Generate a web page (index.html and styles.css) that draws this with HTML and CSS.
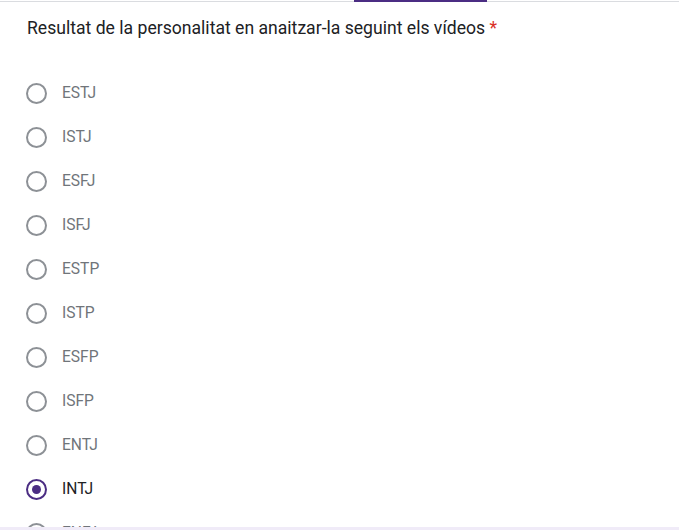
FILE: index.html
```html
<!DOCTYPE html>
<html>
  <head>
    <link rel="stylesheet" href="styles.css">
  </head>
  <body>
    <div class="card">
      <div class="tabs"><div class="tab-indicator"></div></div>

      <div class="question">
        Resultat de la personalitat en anaitzar-la seguint els vídeos <span class="required">*</span>
      </div>

      <div class="options">
        <label class="option"><span class="radio"></span><span class="text">ESTJ</span></label>
        <label class="option"><span class="radio"></span><span class="text">ISTJ</span></label>
        <label class="option"><span class="radio"></span><span class="text">ESFJ</span></label>
        <label class="option"><span class="radio"></span><span class="text">ISFJ</span></label>
        <label class="option"><span class="radio"></span><span class="text">ESTP</span></label>
        <label class="option"><span class="radio"></span><span class="text">ISTP</span></label>
        <label class="option"><span class="radio"></span><span class="text">ESFP</span></label>
        <label class="option"><span class="radio"></span><span class="text">ISFP</span></label>
        <label class="option"><span class="radio"></span><span class="text">ENTJ</span></label>
        <label class="option checked"><span class="radio"></span><span class="text">INTJ</span></label>
        <label class="option"><span class="radio"></span><span class="text">ENFJ</span></label>
      </div>
    </div>
  </body>
</html>
```

FILE: styles.css
```css
body {
  margin: 0;
  background: #f0ebf8;
  font-family: Roboto, "Liberation Sans", sans-serif;
}

.card {
  height: 527px;
  overflow: hidden;
  background: #fff;
}

.tabs {
  display: flex;
  height: 1px;
  border-bottom: 1px solid #dadce0;
}

.tab-indicator {
  margin-left: 354px;
  width: 133px;
  height: 2px;
  background: #4b2d83;
}

.question {
  padding: 14px 27px 0;
  font-size: 17.6px;
  line-height: 24px;
  color: #202124;
}

.required {
  color: #d93025;
}

.options {
  padding: 31px 0 0 26px;
}

.option {
  display: flex;
  align-items: center;
  height: 44px;
}

.radio {
  box-sizing: border-box;
  width: 21px;
  height: 21px;
  border: 2px solid #8d9196;
  border-radius: 50%;
  display: flex;
  align-items: center;
  justify-content: center;
}

.text {
  margin-left: 15px;
  font-size: 15.6px;
  color: #70757a;
}

.option.checked .radio {
  border-color: #4b2d83;
}

.option.checked .radio::after {
  content: "";
  width: 9px;
  height: 9px;
  border-radius: 50%;
  background: #4b2d83;
}

.option.checked .text {
  color: #202124;
}
```
